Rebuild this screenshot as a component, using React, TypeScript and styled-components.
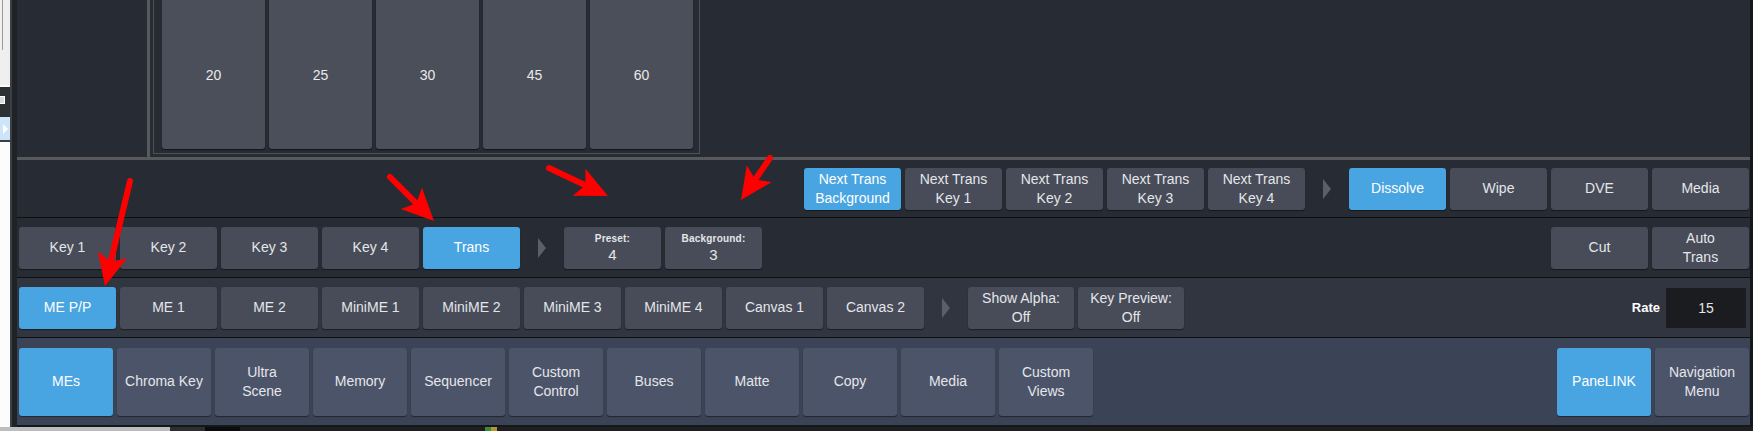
import React from 'react';
import styled, { createGlobalStyle } from 'styled-components';

const GlobalStyle = createGlobalStyle`
  html, body {
    margin: 0;
    padding: 0;
    background: #1b1d21;
  }
  body {
    font-family: 'Liberation Sans', Arial, sans-serif;
    overflow: hidden;
  }
`;

const Screen = styled.div`
  position: relative;
  width: 1753px;
  height: 431px;
  display: flex;
  flex-direction: column;
  overflow: hidden;
`;

const Main = styled.div`
  display: flex;
  height: 427px;
`;

/* ---- other window peeking in on the left ---- */

const SideStrip = styled.div`
  flex: none;
  width: 10px;
  display: flex;
  flex-direction: column;
  border-right: 2px solid #3c3f44;
`;

const SideTop = styled.div`
  height: 85px;
  background: #efefef;
  border-bottom: 2px solid #fbfbfb;
`;

const ScrollLine = styled.div`
  width: 1px;
  height: 50px;
  margin-left: 2px;
  background: #9a9a9a;
`;

const SideDark = styled.div`
  height: 30px;
  background: #2c2f34;
  padding-top: 9px;
  box-sizing: border-box;
`;

const MiniBox = styled.div`
  width: 5px;
  height: 8px;
  box-sizing: border-box;
  border: 1px solid #ffffff;
  border-left: none;
  background: #d9d9d9;
`;

const SideBlue = styled.div`
  height: 23px;
  background: #cde5f8;
  display: flex;
  align-items: center;
  &::after {
    content: '';
    border-left: 5px solid #ffffff;
    border-top: 5px solid transparent;
    border-bottom: 5px solid transparent;
    margin-left: 3px;
  }
`;

const SideWhite = styled.div`
  flex: 1;
  background: #fcfcfc;
  border-top: 2px solid #3a3d42;
`;

const Gutter = styled.div`
  flex: none;
  width: 5px;
  background: #1f2227;
`;

/* ---- main panel ---- */

const Panel = styled.div`
  flex: 1;
  display: flex;
  flex-direction: column;
  background: #272b33;
  border-right: 3px solid #15171a;
  border-bottom: 2px solid #15171b;
`;

const TopArea = styled.div`
  height: 157px;
  display: flex;
  border-bottom: 3px solid #57595d;
`;

const LeftBlank = styled.div`
  width: 130px;
  flex: none;
  border-right: 3px solid #57595d;
`;

const FrameWrap = styled.div`
  padding-left: 3px;
`;

const TileFrame = styled.div`
  height: 154px;
  box-sizing: border-box;
  display: flex;
  align-items: flex-end;
  gap: 4px;
  padding: 0 6px 4px 8px;
  border: 1px solid #4e5156;
  border-top: none;
`;

const Tile = styled.div`
  width: 103px;
  height: 149px;
  background: #4a4f5a;
  border-radius: 0 0 3px 3px;
  box-shadow: 0 1px 1px rgba(0, 0, 0, 0.5);
  display: flex;
  align-items: center;
  justify-content: center;
  color: #e8e9ec;
  font-size: 14px;
`;

const Row = styled.div<{ $h: number; $bg?: string; $line?: boolean }>`
  height: ${p => p.$h}px;
  background: ${p => p.$bg ?? 'transparent'};
  border-top: ${p => (p.$line ? '1px solid #0d0f12' : 'none')};
  display: flex;
  align-items: center;
  gap: 4px;
  padding: 0 1px 0 2px;
`;

const Spacer = styled.div`
  flex: 1;
`;

const Btn = styled.div<{ $active?: boolean; $w?: number; $tall?: boolean; $light?: boolean }>`
  flex: none;
  width: ${p => p.$w ?? 97}px;
  height: ${p => (p.$tall ? 68 : 42)}px;
  box-sizing: border-box;
  border-radius: 3px;
  background: ${p => (p.$active ? '#49a5e1' : p.$light ? '#4c5469' : '#474c58')};
  color: ${p => (p.$active ? '#ffffff' : '#e4e6ea')};
  box-shadow: 0 1px 1px rgba(0, 0, 0, 0.45);
  display: flex;
  flex-direction: column;
  align-items: center;
  justify-content: center;
  text-align: center;
  font-size: 14px;
  line-height: 19px;
  white-space: nowrap;
`;

const SmallLabel = styled.span`
  font-size: 10px;
  font-weight: bold;
  line-height: 13px;
  letter-spacing: 0.2px;
`;

const BigValue = styled.span`
  font-size: 15px;
  line-height: 19px;
`;

const NextArrow = styled.div`
  flex: none;
  width: 36px;
  display: flex;
  justify-content: center;
  &::before {
    content: '';
    border-left: 8px solid #5a5f69;
    border-top: 10px solid transparent;
    border-bottom: 10px solid transparent;
  }
`;

const RateLabel = styled.span`
  color: #ffffff;
  font-size: 13px;
  font-weight: bold;
  margin-right: 2px;
`;

const RateBox = styled.div`
  width: 80px;
  height: 40px;
  background: #1b1c1f;
  color: #e6e6e6;
  font-size: 14px;
  display: flex;
  align-items: center;
  justify-content: center;
  margin-right: 3px;
`;

/* ---- taskbar sliver ---- */

const Taskbar = styled.div`
  height: 4px;
  display: flex;
  background: #1f1f1f;
`;

const TaskSeg = styled.div<{ $w: number; $c: string }>`
  width: ${p => p.$w}px;
  background: ${p => p.$c};
`;

/* ---- red annotation arrows ---- */

const Annotations = styled.svg`
  position: absolute;
  left: 0;
  top: 0;
  pointer-events: none;
`;

function RedArrow({ x1, y1, x2, y2 }: { x1: number; y1: number; x2: number; y2: number }) {
  const dx = x2 - x1;
  const dy = y2 - y1;
  const len = Math.hypot(dx, dy);
  const ux = dx / len;
  const uy = dy / len;
  const head = 32;
  const half = 15;
  const bx = x2 - ux * head;
  const by = y2 - uy * head;
  const px = -uy;
  const py = ux;
  const nx = bx + ux * 7;
  const ny = by + uy * 7;
  const pts = `${x2},${y2} ${bx + px * half},${by + py * half} ${nx},${ny} ${bx - px * half},${by - py * half}`;
  return (
    <g>
      <line x1={x1} y1={y1} x2={nx} y2={ny} stroke="#ff0000" strokeWidth={6} strokeLinecap="round" />
      <polygon points={pts} fill="#ff0000" />
    </g>
  );
}

const tiles = ['20', '25', '30', '45', '60'];
const nextTrans = ['Background', 'Key 1', 'Key 2', 'Key 3', 'Key 4'];
const transTypes = ['Dissolve', 'Wipe', 'DVE', 'Media'];
const keys = ['Key 1', 'Key 2', 'Key 3', 'Key 4'];
const mes = ['ME 1', 'ME 2', 'MiniME 1', 'MiniME 2', 'MiniME 3', 'MiniME 4', 'Canvas 1', 'Canvas 2'];
const menus: string[][] = [
  ['Chroma Key'],
  ['Ultra', 'Scene'],
  ['Memory'],
  ['Sequencer'],
  ['Custom', 'Control'],
  ['Buses'],
  ['Matte'],
  ['Copy'],
  ['Media'],
  ['Custom', 'Views'],
];

const App: React.FC = () => {
  return (
    <>
      <GlobalStyle />
      <Screen>
        <Main>
          <SideStrip>
            <SideTop>
              <ScrollLine />
            </SideTop>
            <SideDark>
              <MiniBox />
            </SideDark>
            <SideBlue />
            <SideWhite />
          </SideStrip>
          <Gutter />
          <Panel>
            <TopArea>
              <LeftBlank />
              <FrameWrap>
                <TileFrame>
                  {tiles.map(t => (
                    <Tile key={t}>{t}</Tile>
                  ))}
                </TileFrame>
              </FrameWrap>
            </TopArea>

            <Row $h={57}>
              <Spacer />
              {nextTrans.map((n, i) => (
                <Btn key={n} $active={i === 0}>
                  <span>Next Trans</span>
                  <span>{n}</span>
                </Btn>
              ))}
              <NextArrow />
              {transTypes.map((t, i) => (
                <Btn key={t} $active={i === 0}>
                  {t}
                </Btn>
              ))}
            </Row>

            <Row $h={59} $line>
              {keys.map(k => (
                <Btn key={k}>{k}</Btn>
              ))}
              <Btn $active>Trans</Btn>
              <NextArrow />
              <Btn>
                <SmallLabel>Preset:</SmallLabel>
                <BigValue>4</BigValue>
              </Btn>
              <Btn>
                <SmallLabel>Background:</SmallLabel>
                <BigValue>3</BigValue>
              </Btn>
              <Spacer />
              <Btn>Cut</Btn>
              <Btn>
                <span>Auto</span>
                <span>Trans</span>
              </Btn>
            </Row>

            <Row $h={59} $line $bg="#30353f">
              <Btn $active>ME P/P</Btn>
              {mes.map(m => (
                <Btn key={m}>{m}</Btn>
              ))}
              <NextArrow />
              <Btn $w={106}>
                <span>Show Alpha:</span>
                <span>Off</span>
              </Btn>
              <Btn $w={106}>
                <span>Key Preview:</span>
                <span>Off</span>
              </Btn>
              <Spacer />
              <RateLabel>Rate</RateLabel>
              <RateBox>15</RateBox>
            </Row>

            <Row $h={87} $line $bg="#3b4456">
              <Btn $w={94} $tall $active>
                MEs
              </Btn>
              {menus.map(lines => (
                <Btn key={lines.join(' ')} $w={94} $tall $light>
                  {lines.map(l => (
                    <span key={l}>{l}</span>
                  ))}
                </Btn>
              ))}
              <Spacer />
              <Btn $w={94} $tall $active>
                PaneLINK
              </Btn>
              <Btn $w={94} $tall $light>
                <span>Navigation</span>
                <span>Menu</span>
              </Btn>
            </Row>
          </Panel>
        </Main>
        <Taskbar>
          <TaskSeg $w={170} $c="#bdbdbd" />
          <TaskSeg $w={35} $c="#2e2e2e" />
          <TaskSeg $w={35} $c="#0b0b0b" />
          <TaskSeg $w={245} $c="#1f1f1f" />
          <TaskSeg $w={6} $c="#3c8a3c" />
          <TaskSeg $w={6} $c="#b8962e" />
        </Taskbar>
        <Annotations width={1753} height={431} viewBox="0 0 1753 431">
          <RedArrow x1={130} y1={181} x2={105} y2={286} />
          <RedArrow x1={390} y1={177} x2={434} y2={221} />
          <RedArrow x1={549} y1={168} x2={608} y2={196} />
          <RedArrow x1={770} y1={158} x2={741} y2={200} />
        </Annotations>
      </Screen>
    </>
  );
};

export default App;
